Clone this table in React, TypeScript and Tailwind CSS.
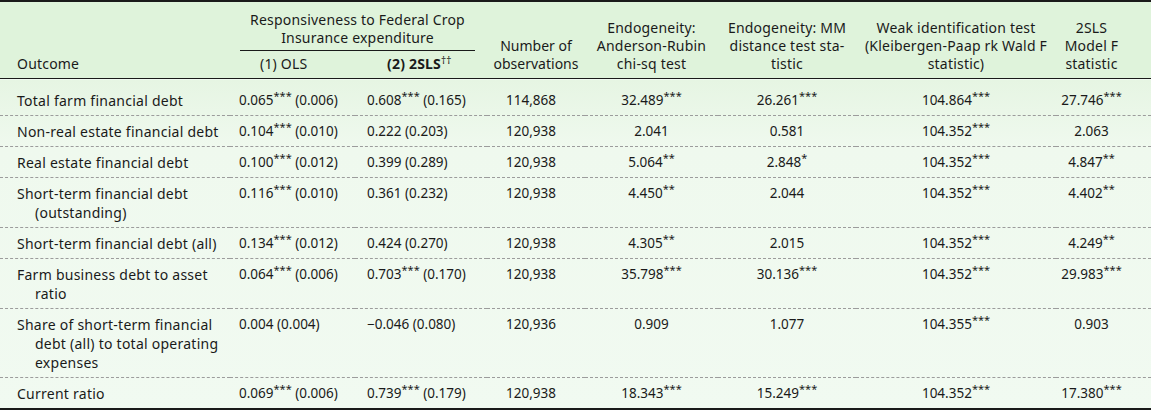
import type { ReactNode } from 'react'

type Row = {
  outcome: string[]
  ols: [string, string]
  tsls: [string, string]
  n: string
  ar: string
  mm: string
  weak: string
  f: string
}

const ROWS: Row[] = [
  { outcome: ['Total farm financial debt'], ols: ['0.065***', '(0.006)'], tsls: ['0.608***', '(0.165)'], n: '114,868', ar: '32.489***', mm: '26.261***', weak: '104.864***', f: '27.746***' },
  { outcome: ['Non-real estate financial debt'], ols: ['0.104***', '(0.010)'], tsls: ['0.222', '(0.203)'], n: '120,938', ar: '2.041', mm: '0.581', weak: '104.352***', f: '2.063' },
  { outcome: ['Real estate financial debt'], ols: ['0.100***', '(0.012)'], tsls: ['0.399', '(0.289)'], n: '120,938', ar: '5.064**', mm: '2.848*', weak: '104.352***', f: '4.847**' },
  { outcome: ['Short-term financial debt', '(outstanding)'], ols: ['0.116***', '(0.010)'], tsls: ['0.361', '(0.232)'], n: '120,938', ar: '4.450**', mm: '2.044', weak: '104.352***', f: '4.402**' },
  { outcome: ['Short-term financial debt (all)'], ols: ['0.134***', '(0.012)'], tsls: ['0.424', '(0.270)'], n: '120,938', ar: '4.305**', mm: '2.015', weak: '104.352***', f: '4.249**' },
  { outcome: ['Farm business debt to asset', 'ratio'], ols: ['0.064***', '(0.006)'], tsls: ['0.703***', '(0.170)'], n: '120,938', ar: '35.798***', mm: '30.136***', weak: '104.352***', f: '29.983***' },
  { outcome: ['Share of short-term financial', 'debt (all) to total operating', 'expenses'], ols: ['0.004', '(0.004)'], tsls: ['\u22120.046', '(0.080)'], n: '120,936', ar: '0.909', mm: '1.077', weak: '104.355***', f: '0.903' },
  { outcome: ['Current ratio'], ols: ['0.069***', '(0.006)'], tsls: ['0.739***', '(0.179)'], n: '120,938', ar: '18.343***', mm: '15.249***', weak: '104.352***', f: '17.380***' },
]

// "0.065***" -> 0.065 with superscript stars
function Num({ v }: { v: string }) {
  const m = v.match(/^(.*?)(\**)$/)
  const base = m ? m[1] : v
  const stars = m ? m[2] : ''
  return (
    <>
      {base}
      {stars && <sup className="text-[11px]">{stars}</sup>}
    </>
  )
}

function Th({ children, className = '' }: { children: ReactNode; className?: string }) {
  return (
    <th rowSpan={2} className={`align-bottom pb-[5px] font-normal ${className}`}>
      {children}
    </th>
  )
}

export default function App() {
  return (
    <div className="w-[1151px] bg-[#f0faef] font-['Noto_Sans',sans-serif] text-[13.5px] text-[#1a1a1a]">
      <table className="w-full table-fixed border-collapse border-t-2 border-b-2 border-[#1a1a1a]">
        <colgroup>
          <col className="w-[230px]" />
          <col className="w-[125px]" />
          <col className="w-[132px]" />
          <col className="w-[98px]" />
          <col className="w-[133px]" />
          <col className="w-[138px]" />
          <col className="w-[200px]" />
          <col className="w-[95px]" />
        </colgroup>
        <thead className="bg-[#dff3db] text-[14px] leading-[18px] tracking-[0.2px]">
          <tr>
            <Th className="pl-[17px] text-left">Outcome</Th>
            <th colSpan={2} className="pt-[9px] pl-[10px] pr-[12px] font-normal">
              <div className="border-b border-[#1a1a1a] pb-[3px] text-center">
                Responsiveness to Federal Crop
                <br />
                Insurance expenditure
              </div>
            </th>
            <Th className="text-center tracking-normal">
              Number of
              <br />
              observations
            </Th>
            <Th className="text-center">
              Endogeneity:
              <br />
              Anderson-Rubin
              <br />
              chi-sq test
            </Th>
            <Th className="text-center">
              Endogeneity: MM
              <br />
              distance test sta-
              <br />
              tistic
            </Th>
            <Th className="text-center">
              Weak identification test
              <br />
              (Kleibergen-Paap rk Wald F
              <br />
              statistic)
            </Th>
            <Th className="pr-[24px] text-center">
              2SLS
              <br />
              Model F
              <br />
              statistic
            </Th>
          </tr>
          <tr>
            <th className="pt-[4px] pb-[5px] pl-[30px] text-left font-normal">(1) OLS</th>
            <th className="pt-[4px] pb-[5px] pl-[32px] text-left font-bold">
              (2) 2SLS<sup className="font-normal text-[10px]">{'\u2020\u2020'}</sup>
            </th>
          </tr>
        </thead>
        <tbody className="border-t border-[#1a1a1a] bg-gradient-to-b from-[#e6f5e3] via-[#eff9ee] via-[20%] to-[#f1faf1] leading-[19px]">
          {ROWS.map((r, i) => {
            const last = i === ROWS.length - 1
            const cell = `align-top pb-[5px] ${i === 0 ? 'pt-[12px]' : 'pt-[6px]'} ${
              last ? '' : 'border-b border-dashed border-[#9c9c9c]'
            }`
            return (
              <tr key={i}>
                <td className={`${cell} pl-[17px] pr-[2px] text-[14px] tracking-[0.25px]`}>
                  {r.outcome.map((line, j) => (
                    <div key={j} className={j > 0 ? 'pl-[18px]' : ''}>
                      {line}
                    </div>
                  ))}
                </td>
                <td className={`${cell} pl-[9px] whitespace-nowrap`}>
                  <Num v={r.ols[0]} /> {r.ols[1]}
                </td>
                <td className={`${cell} pl-[12px] whitespace-nowrap`}>
                  <Num v={r.tsls[0]} /> {r.tsls[1]}
                </td>
                <td className={`${cell} pl-[19px]`}>{r.n}</td>
                <td className={`${cell} text-center`}>
                  <Num v={r.ar} />
                </td>
                <td className={`${cell} text-center`}>
                  <Num v={r.mm} />
                </td>
                <td className={`${cell} text-center`}>
                  <Num v={r.weak} />
                </td>
                <td className={`${cell} pr-[24px] text-center`}>
                  <Num v={r.f} />
                </td>
              </tr>
            )
          })}
        </tbody>
      </table>
    </div>
  )
}
